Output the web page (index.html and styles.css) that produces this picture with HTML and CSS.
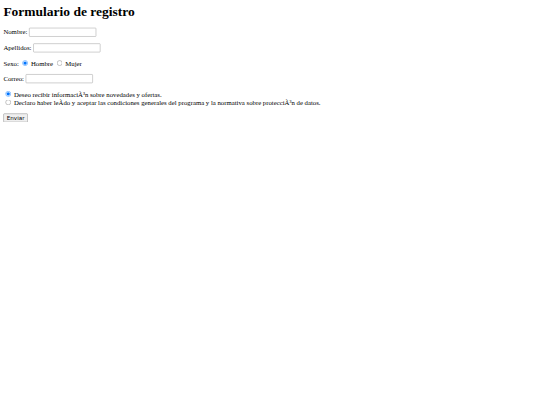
FILE: index.html
```html
<!DOCTYPE html>
<html lang="es">
<head>
<meta charset="utf-8">
<title>Formulario de registro</title>
<link rel="stylesheet" href="styles.css">
</head>
<body>
<div class="page">
<h1 class="title">Formulario de registro</h1>
<form class="form">
<p class="row"><label>Nombre: <input type="text" class="field"></label></p>
<p class="row"><label>Apellidos: <input type="text" class="field"></label></p>
<p class="row">Sexo: <input type="radio" name="sexo" checked class="radio"> Hombre <input type="radio" name="sexo" class="radio"> Mujer</p>
<p class="row"><label>Correo: <input type="text" class="field"></label></p>
<p class="row"><input type="radio" name="info" checked class="radio"> Deseo recibir informaciÃ³n sobre novedades y ofertas.<br>
<input type="radio" name="cond" class="radio"> Declaro haber leÃ&shy;do y aceptar las condiciones generales del programa y la normativa sobre protecciÃ³n de datos.</p>
<p class="row"><button type="button" class="btn">Enviar</button></p>
</form>
</div>
</body>
</html>
```
FILE: styles.css
```css
html, body {
  margin: 0;
  padding: 0;
  background: #fff;
  overflow: hidden;
}
.page {
  box-sizing: border-box;
  width: 1276px;
  padding: 8px;
  transform: scale(0.421875);
  transform-origin: 0 0;
  font-family: "Liberation Serif", "Times New Roman", serif;
  font-size: 16px;
  color: #000;
}
.title {
  font-size: 32px;
  font-weight: bold;
  margin: 0 0 21.44px;
}
.form {
  margin: 0;
}
.row {
  margin: 16px 0;
}
.field {
  box-sizing: border-box;
  width: 159px;
  height: 21px;
  padding: 1px 2px;
  border: 1px solid #8f8f8f;
  border-radius: 2px;
  font-family: "DejaVu Sans", sans-serif;
  font-size: 13.33px;
}
.radio {
  width: 13px;
  height: 13px;
  margin: 3px 3px 0 5px;
}
.btn {
  font-family: "DejaVu Sans", sans-serif;
  font-size: 13.33px;
}
```
